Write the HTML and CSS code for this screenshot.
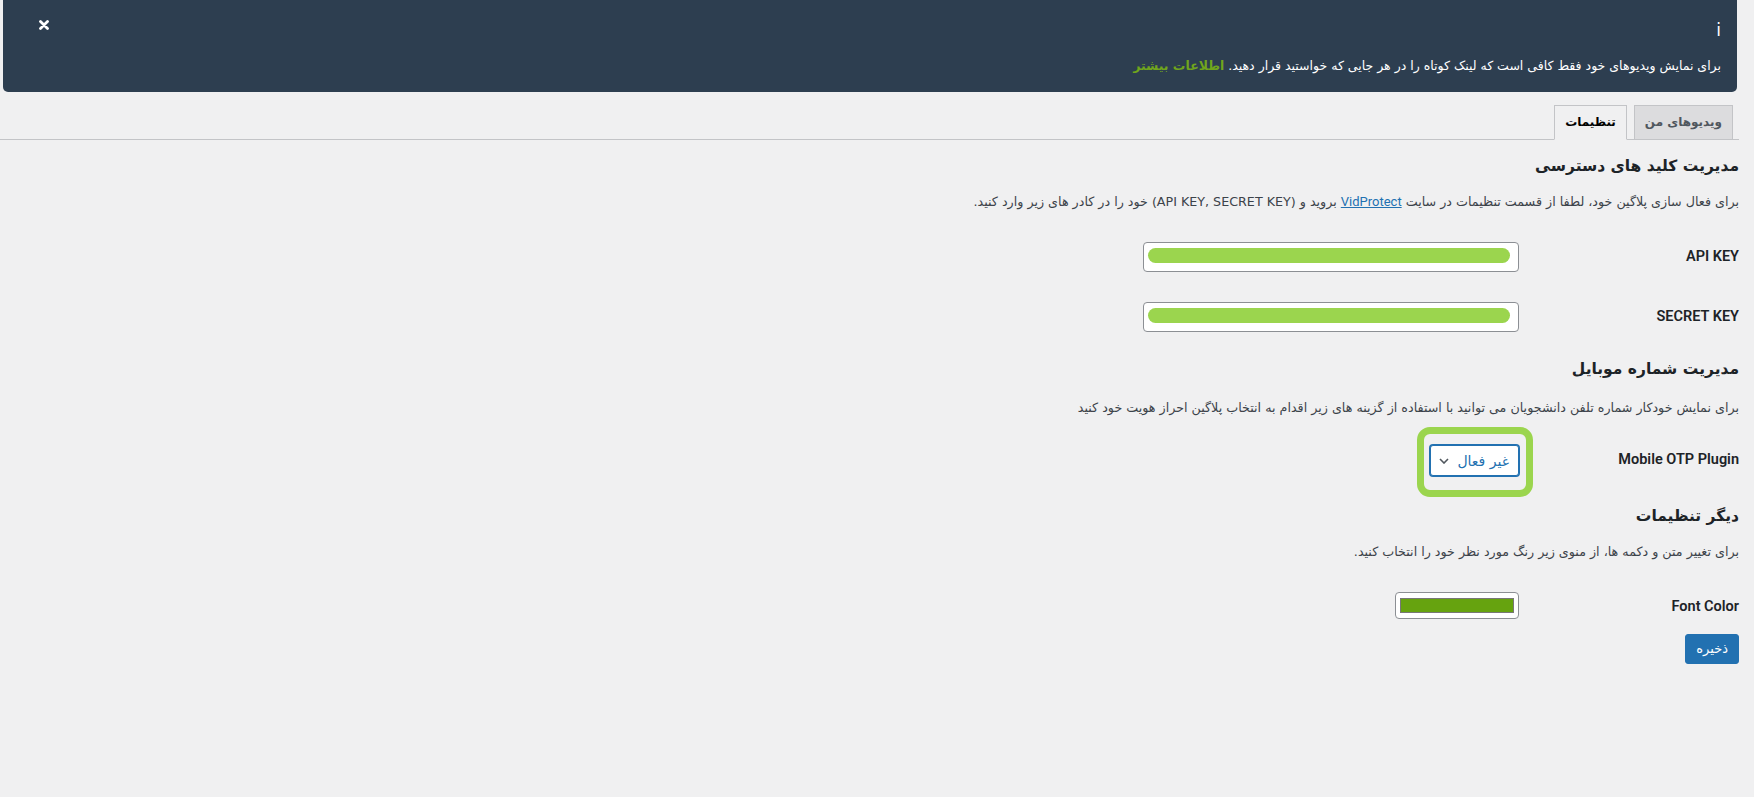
FILE: index.html
```html
<!DOCTYPE html>
<html lang="fa" dir="rtl">
<head>
<meta charset="utf-8">
<title>تنظیمات</title>
<link rel="stylesheet" href="styles.css">
</head>
<body>
<div class="wrap">
  <div class="notice">
    <button class="notice-close" type="button" aria-label="بستن">
      <svg width="10" height="10" viewBox="0 0 10 10"><path d="M1.5 1.5 L8.5 8.5 M8.5 1.5 L1.5 8.5" stroke="#fff" stroke-width="2.8" stroke-linecap="round"/></svg>
    </button>
    <div class="notice-icon">i</div>
    <p class="notice-text">برای نمایش ویدیوهای خود فقط کافی است که لینک کوتاه را در هر جایی که خواستید قرار دهید. <a class="notice-link" href="#">اطلاعات بیشتر</a></p>
  </div>

  <nav class="tabs">
    <a class="tab" href="#">ویدیوهای من</a>
    <a class="tab tab-active" href="#">تنظیمات</a>
  </nav>

  <h2 class="section-title">مدیریت کلید های دسترسی</h2>
  <p class="section-desc">برای فعال سازی پلاگین خود، لطفا از قسمت تنظیمات در سایت <a class="desc-link" href="#">VidProtect</a> بروید و (API KEY, SECRET KEY) خود را در کادر های زیر وارد کنید.</p>
  <div class="form-table">
    <div class="form-row">
      <div class="form-label">API KEY</div>
      <div class="form-field"><div class="text-input"><span class="redact"></span></div></div>
    </div>
    <div class="form-row">
      <div class="form-label">SECRET KEY</div>
      <div class="form-field"><div class="text-input"><span class="redact"></span></div></div>
    </div>
  </div>

  <h2 class="section-title">مدیریت شماره موبایل</h2>
  <p class="section-desc section-desc-loose">برای نمایش خودکار شماره تلفن دانشجویان می توانید با استفاده از گزینه های زیر اقدام به انتخاب پلاگین احراز هویت خود کنید</p>
  <div class="form-table">
    <div class="form-row">
      <div class="form-label">Mobile OTP Plugin</div>
      <div class="form-field form-field-select">
        <div class="highlight">
          <div class="select">
            <span class="select-value">غیر فعال</span>
            <svg class="chevron" width="10" height="6" viewBox="0 0 10 6"><path d="M1 1 L5 5 L9 1" fill="none" stroke="#50575e" stroke-width="1.6"/></svg>
          </div>
        </div>
      </div>
    </div>
  </div>

  <h2 class="section-title">دیگر تنظیمات</h2>
  <p class="section-desc">برای تغییر متن و دکمه ها، از منوی زیر رنگ مورد نظر خود را انتخاب کنید.</p>
  <div class="form-table">
    <div class="form-row">
      <div class="form-label">Font Color</div>
      <div class="form-field"><div class="color-input"><span class="swatch"></span></div></div>
    </div>
  </div>
  <div class="submit-row">
    <button class="btn-primary" type="button">ذخیره</button>
  </div>
</div>
</body>
</html>
```

FILE: styles.css
```css
html, body {
  margin: 0;
  padding: 0;
}
body {
  background: #f0f0f1;
  color: #1d2327;
  font-family: Roboto, "DejaVu Sans", sans-serif;
  font-size: 13px;
  direction: rtl;
}
.wrap {
  padding: 0 15px 0 0;
}

/* notice */
.notice {
  position: relative;
  background: #2d3e50;
  color: #fff;
  margin: 0 2px 0 3px;
  padding: 19px 16px 16px;
  border-radius: 0 0 5px 5px;
}
.notice-close {
  position: absolute;
  left: 36px;
  top: 20px;
  width: 10px;
  height: 10px;
  padding: 0;
  border: 0;
  background: none;
  display: flex;
}
.notice-icon {
  font-family: "DejaVu Sans", sans-serif;
  font-size: 17px;
  line-height: 22px;
  height: 22px;
}
.notice-text {
  margin: 15px 0 0;
  font-family: "DejaVu Sans", sans-serif;
  font-size: 12.5px;
  line-height: 20px;
}
.notice-link {
  color: #70a51c;
  font-weight: bold;
  text-decoration: none;
}

/* tabs */
.tabs {
  display: flex;
  gap: 7px;
  margin-top: 13px;
  margin-bottom: 14px;
  padding-right: 6px;
  border-bottom: 1px solid #c3c4c7;
}
.tab {
  display: block;
  padding: 4px 10px 5px;
  line-height: 24px;
  font-family: "DejaVu Sans", sans-serif;
  font-size: 12px;
  font-weight: bold;
  color: #50575e;
  background: #dcdcde;
  border: 1px solid #c3c4c7;
  margin-bottom: -1px;
  text-decoration: none;
}
.tab-active {
  color: #000;
  background: #f0f0f1;
  border-bottom-color: #f0f0f1;
}

/* sections */
.section-title {
  margin: 10px 0 13px;
  font-family: "DejaVu Sans", sans-serif;
  font-size: 15.5px;
  line-height: 25px;
  font-weight: bold;
  color: #1d2327;
}
.section-desc {
  margin: 0 0 15px;
  font-family: "DejaVu Sans", sans-serif;
  font-size: 12.7px;
  line-height: 20px;
  color: #3c434a;
}
.section-desc-loose {
  margin-top: 16px;
  margin-bottom: 12px;
}
.desc-link {
  font-family: Roboto, sans-serif;
  font-size: 13px;
  color: #2271b1;
  text-decoration: underline;
}

/* form table */
.form-row {
  display: flex;
  align-items: flex-start;
}
.form-label {
  width: 200px;
  flex: none;
  padding: 21px 0 15px 10px;
  font-family: Roboto, sans-serif;
  font-size: 14.5px;
  line-height: 18px;
  font-weight: 600;
  color: #1d2327;
}
.form-field {
  padding: 15px 10px;
  display: flex;
}
.form-field-select {
  padding-bottom: 18px;
}
.text-input {
  box-sizing: border-box;
  width: 376px;
  height: 30px;
  background: #fff;
  border: 1px solid #8c8f94;
  border-radius: 4px;
  display: flex;
  justify-content: flex-end;
  padding: 5px 8px 0 4px;
}
.redact {
  display: block;
  width: 362px;
  height: 15px;
  border-radius: 8px;
  background: #9bd54e;
}

/* select with highlight */
.highlight {
  position: relative;
}
.highlight::after {
  content: "";
  position: absolute;
  top: -18px;
  right: -14px;
  bottom: -21px;
  left: -13px;
  border: 7px solid #9bd54e;
  border-radius: 13px;
  pointer-events: none;
}
.select {
  box-sizing: border-box;
  width: 89px;
  height: 31px;
  display: flex;
  align-items: center;
  justify-content: space-between;
  padding: 0 9px 0 8px;
  background: #fff;
  border: 1px solid #2271b1;
  box-shadow: 0 0 0 1px #2271b1;
  border-radius: 3px;
}
.select-value {
  font-family: "DejaVu Sans", sans-serif;
  font-size: 14px;
  color: #2271b1;
}
.chevron {
  display: block;
}

/* color input */
.color-input {
  box-sizing: border-box;
  width: 124px;
  height: 27px;
  background: #fff;
  border: 1px solid #8c8f94;
  border-radius: 4px;
  padding: 5px 4px;
  display: flex;
}
.swatch {
  flex: 1;
  background: #66a30f;
  border: 1px solid #777;
}

/* submit */
.submit-row {
  display: flex;
  margin-top: 0;
}
.btn-primary {
  height: 30px;
  padding: 0 10px;
  border: 1px solid #2271b1;
  border-radius: 3px;
  background: #2271b1;
  color: #fff;
  font-family: "DejaVu Sans", sans-serif;
  font-size: 13px;
  line-height: 28px;
}
```
